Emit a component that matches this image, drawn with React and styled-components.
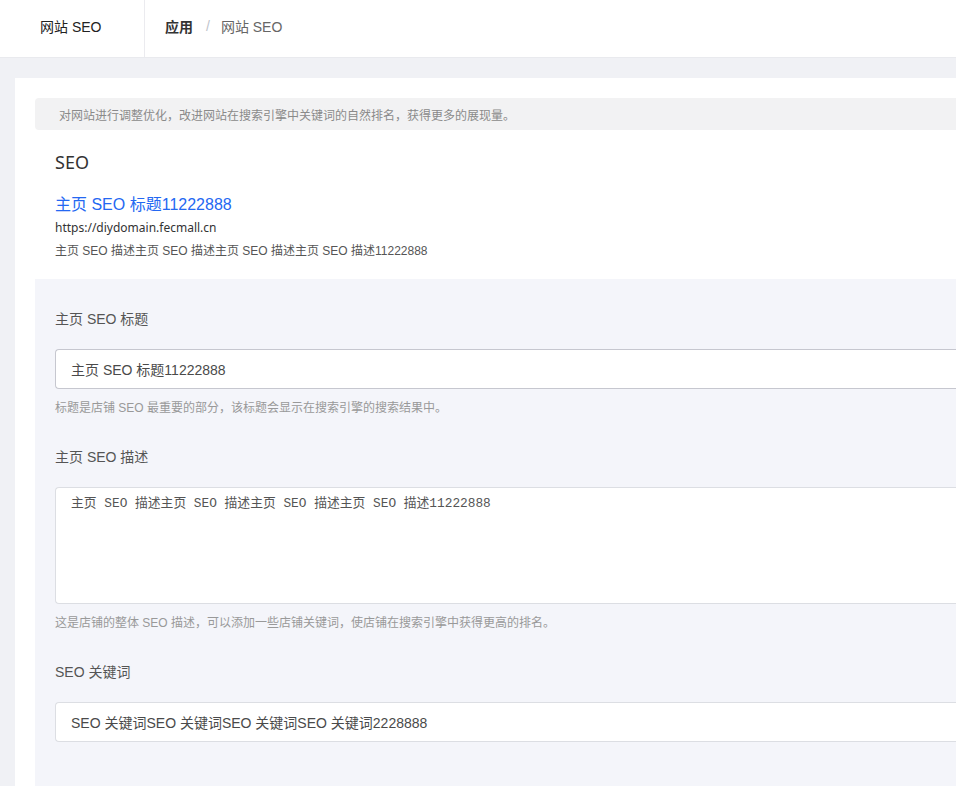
import React from "react";
import styled, { createGlobalStyle } from "styled-components";

const Global = createGlobalStyle`
  html, body { margin: 0; padding: 0; background: #fff; }
  body { font-family: "Liberation Sans", "Noto Sans CJK SC", sans-serif; overflow: hidden; }
  * { box-sizing: border-box; }
`;

const Page = styled.div`
  width: 956px;
  min-height: 786px;
  display: flex;
  flex-direction: column;
  background: #f0f1f5;
`;

const Header = styled.header`
  height: 58px;
  display: flex;
  background: #fff;
  border-bottom: 1px solid #e9eaee;
`;

const HeaderTitle = styled.div`
  width: 145px;
  border-right: 1px solid #ebebef;
  display: flex;
  align-items: center;
  padding: 0 0 6px 40px;
  font-size: 14px;
  color: #222;
`;

const Crumbs = styled.nav`
  display: flex;
  align-items: center;
  padding: 0 0 6px 20px;
  font-size: 14px;
`;

const Crumb = styled.span`
  color: ${(p) => (p.$active ? "#333" : "#666")};
  font-weight: ${(p) => (p.$active ? 700 : 400)};
`;

const Sep = styled.span`
  color: #c0c4cc;
  margin: 0 11px 0 13px;
`;

const Body = styled.main`
  flex: 1;
  padding: 20px 0 0 15px;
  display: flex;
`;

const Card = styled.section`
  flex: 1;
  background: #fff;
  padding: 20px 0 0 20px;
  display: flex;
  flex-direction: column;
`;

const Notice = styled.div`
  height: 32px;
  background: #f2f2f3;
  border-radius: 4px 0 0 4px;
  display: flex;
  align-items: center;
  padding-left: 24px;
  font-size: 12px;
  color: #8a8a8a;
`;

const Preview = styled.div`
  padding: 20px 20px 17px;
  display: flex;
  flex-direction: column;
`;

const Heading = styled.h2`
  margin: 0;
  font-family: "Noto Sans", "Noto Sans CJK SC", sans-serif;
  font-size: 18px;
  line-height: 24px;
  font-weight: 400;
  color: #333;
`;

const PreviewTitle = styled.div`
  margin-top: 20px;
  font-size: 16px;
  line-height: 22px;
  color: #2468f2;
`;

const PreviewLine = styled.div`
  font-family: ${(p) =>
    p.$wide ? `"Noto Sans", "Noto Sans CJK SC", sans-serif` : "inherit"};
  font-size: 12px;
  line-height: 22px;
  color: ${(p) => p.$color};
  margin-top: 1px;
`;

const Form = styled.div`
  flex: 1;
  background: #f4f5fa;
  padding: 29px 0 40px 20px;
  display: flex;
  flex-direction: column;
  gap: 28px;
`;

const Field = styled.div`
  display: flex;
  flex-direction: column;
`;

const Label = styled.label`
  font-size: 14px;
  line-height: 22px;
  color: #555;
  margin-bottom: 19px;
`;

const Input = styled.div`
  height: 40px;
  background: #fff;
  border: 1px solid ${(p) => (p.$strong ? "#c6c7cf" : "#dcdee3")};
  border-right: none;
  border-radius: 4px 0 0 4px;
  display: flex;
  align-items: center;
  padding-left: 15px;
  font-size: 14px;
  color: #4a4a4a;
`;

const TextArea = styled.div`
  height: 117px;
  background: #fff;
  border: 1px solid #dcdee3;
  border-right: none;
  border-radius: 4px 0 0 4px;
  padding: 7px 0 0 15px;
  font-family: "Liberation Mono", "Noto Sans CJK SC", monospace;
  font-size: 12.8px;
  line-height: 17px;
  color: #555;
  white-space: pre;
`;

const Help = styled.div`
  margin-top: 9px;
  font-size: 12px;
  line-height: 20px;
  color: #999;
`;

export default function App() {
  return (
    <>
      <Global />
      <Page>
        <Header>
          <HeaderTitle>网站 SEO</HeaderTitle>
          <Crumbs>
            <Crumb $active>应用</Crumb>
            <Sep>/</Sep>
            <Crumb>网站 SEO</Crumb>
          </Crumbs>
        </Header>
        <Body>
          <Card>
            <Notice>对网站进行调整优化，改进网站在搜索引擎中关键词的自然排名，获得更多的展现量。</Notice>
            <Preview>
              <Heading>SEO</Heading>
              <PreviewTitle>主页 SEO 标题11222888</PreviewTitle>
              <PreviewLine $color="#333" $wide>https://diydomain.fecmall.cn</PreviewLine>
              <PreviewLine $color="#555">主页 SEO 描述主页 SEO 描述主页 SEO 描述主页 SEO 描述11222888</PreviewLine>
            </Preview>
            <Form>
              <Field>
                <Label>主页 SEO 标题</Label>
                <Input $strong>主页 SEO 标题11222888</Input>
                <Help>标题是店铺 SEO 最重要的部分，该标题会显示在搜索引擎的搜索结果中。</Help>
              </Field>
              <Field>
                <Label>主页 SEO 描述</Label>
                <TextArea>主页 SEO 描述主页 SEO 描述主页 SEO 描述主页 SEO 描述11222888</TextArea>
                <Help>这是店铺的整体 SEO 描述，可以添加一些店铺关键词，使店铺在搜索引擎中获得更高的排名。</Help>
              </Field>
              <Field>
                <Label>SEO 关键词</Label>
                <Input>SEO 关键词SEO 关键词SEO 关键词SEO 关键词2228888</Input>
              </Field>
            </Form>
          </Card>
        </Body>
      </Page>
    </>
  );
}
